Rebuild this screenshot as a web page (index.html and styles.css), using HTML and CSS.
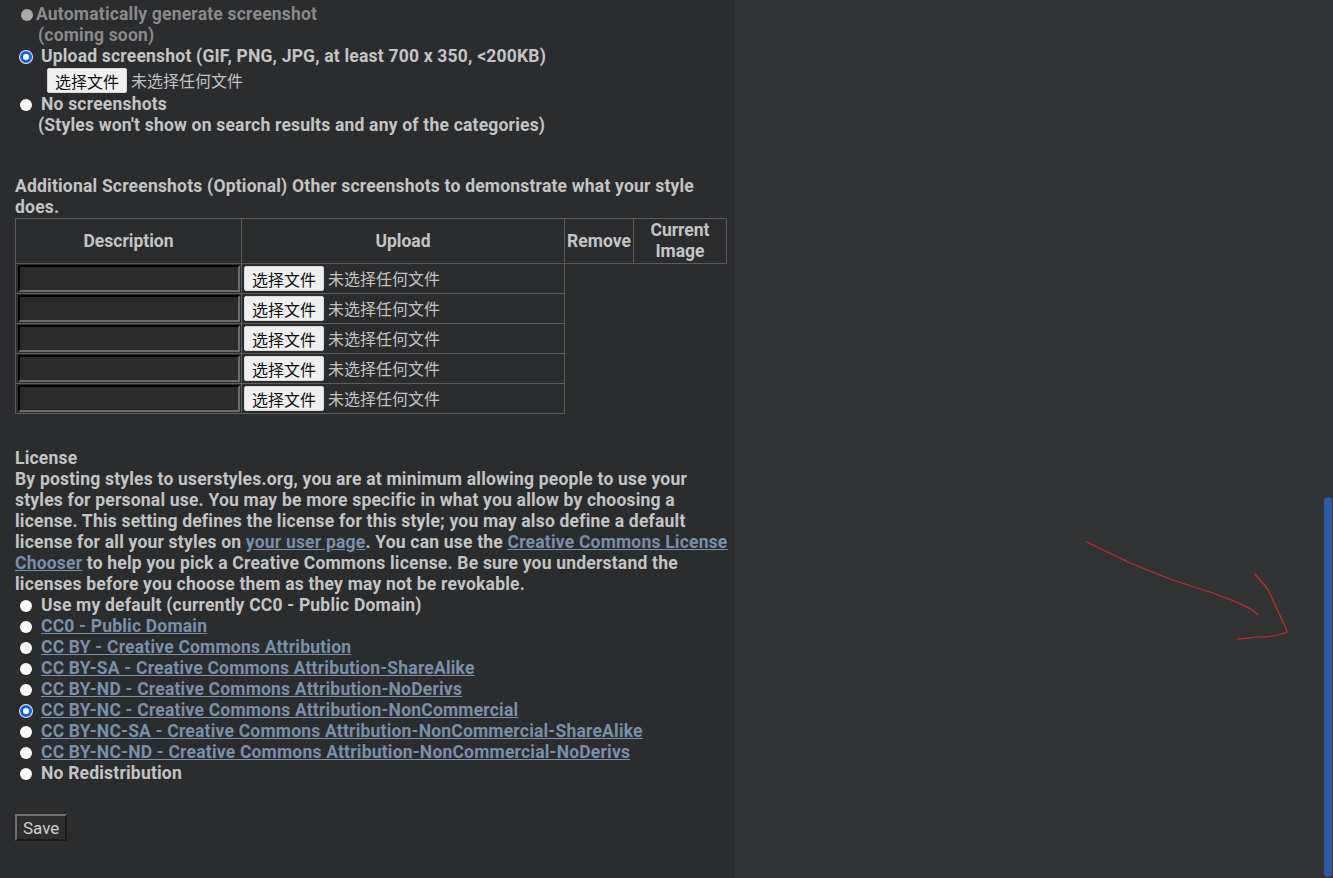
FILE: index.html
```html
<!DOCTYPE html>
<html lang="en">
<head>
<meta charset="utf-8">
<title>Edit style</title>
<link rel="stylesheet" href="styles.css">
</head>
<body>
<div class="page">
  <main class="content">
    <div class="opt disabled"><input type="radio" name="shot" disabled>Automatically generate screenshot<br>(coming soon)</div>
    <div class="opt"><input type="radio" name="shot" checked>Upload screenshot (GIF, PNG, JPG, at least 700 x 350, &lt;200KB)</div>
    <div class="file-row"><button class="file-btn" type="button">选择文件</button><span class="file-none">未选择任何文件</span></div>
    <div class="opt"><input type="radio" name="shot">No screenshots<br>(Styles won't show on search results and any of the categories)</div>

    <p class="section-title">Additional Screenshots (Optional) Other screenshots to demonstrate what your style does.</p>
    <table class="shots">
      <colgroup><col class="c-desc"><col class="c-up"><col class="c-rm"><col class="c-cur"></colgroup>
      <thead>
        <tr><th>Description</th><th>Upload</th><th>Remove</th><th>Current Image</th></tr>
      </thead>
      <tbody>
        <tr><td><input class="desc" type="text"></td><td><span class="file-row tight"><button class="file-btn" type="button">选择文件</button><span class="file-none">未选择任何文件</span></span></td></tr>
        <tr><td><input class="desc" type="text"></td><td><span class="file-row tight"><button class="file-btn" type="button">选择文件</button><span class="file-none">未选择任何文件</span></span></td></tr>
        <tr><td><input class="desc" type="text"></td><td><span class="file-row tight"><button class="file-btn" type="button">选择文件</button><span class="file-none">未选择任何文件</span></span></td></tr>
        <tr><td><input class="desc" type="text"></td><td><span class="file-row tight"><button class="file-btn" type="button">选择文件</button><span class="file-none">未选择任何文件</span></span></td></tr>
        <tr><td><input class="desc" type="text"></td><td><span class="file-row tight"><button class="file-btn" type="button">选择文件</button><span class="file-none">未选择任何文件</span></span></td></tr>
      </tbody>
    </table>

    <div class="license">
      <div>License</div>
      <p class="lic-text">By posting styles to userstyles.org, you are at minimum allowing people to use your styles for personal use. You may be more specific in what you allow by choosing a license. This setting defines the license for this style; you may also define a default license for all your styles on <a href="#">your user page</a>. You can use the <a href="#">Creative Commons License Chooser</a> to help you pick a Creative Commons license. Be sure you understand the licenses before you choose them as they may not be revokable.</p>
      <div class="opt"><input type="radio" name="lic">Use my default (currently CC0 - Public Domain)</div>
      <div class="opt"><input type="radio" name="lic"><a href="#">CC0 - Public Domain</a></div>
      <div class="opt"><input type="radio" name="lic"><a href="#">CC BY - Creative Commons Attribution</a></div>
      <div class="opt"><input type="radio" name="lic"><a href="#">CC BY-SA - Creative Commons Attribution-ShareAlike</a></div>
      <div class="opt"><input type="radio" name="lic"><a href="#">CC BY-ND - Creative Commons Attribution-NoDerivs</a></div>
      <div class="opt"><input type="radio" name="lic" checked><a href="#">CC BY-NC - Creative Commons Attribution-NonCommercial</a></div>
      <div class="opt"><input type="radio" name="lic"><a href="#">CC BY-NC-SA - Creative Commons Attribution-NonCommercial-ShareAlike</a></div>
      <div class="opt"><input type="radio" name="lic"><a href="#">CC BY-NC-ND - Creative Commons Attribution-NonCommercial-NoDerivs</a></div>
      <div class="opt"><input type="radio" name="lic">No Redistribution</div>
    </div>

    <button class="save" type="button">Save</button>
  </main>
  <div class="side">
    <svg class="arrow" width="598" height="878" viewBox="0 0 598 878" aria-hidden="true">
      <path d="M352 542 C370 551 385 558 395 563 C410 569 425 575 435 579 C450 584 462 588 475 592 C488 597 500 601 508 605 C515 608 520 612 523 615" />
      <path d="M520 574 C525 580 530 585 533 590 C538 600 543 610 547 620 C549 625 552 629 552 632 C548 634 543 635 538 636 C532 637 527 637 522 637 C514 638 508 639 502 639" />
    </svg>
  </div>
  <div class="scrollbar"><div class="thumb"></div></div>
</div>
</body>
</html>
```

FILE: styles.css
```css
html, body {
  margin: 0;
  height: 100%;
  overflow: hidden;
}
body {
  background: #323334;
  font-family: Roboto, "Noto Sans CJK SC", sans-serif;
  font-weight: 700;
  font-size: 17.5px;
  line-height: 21px;
  letter-spacing: 0.2px;
  color: #c4c4c4;
}
.page {
  display: flex;
  height: 878px;
}
.content {
  width: 735px;
  box-sizing: border-box;
  padding: 4px 0 0 15px;
  background: #2b2c2e;
  flex: none;
}
.side {
  flex: 1;
  position: relative;
  background: #323334;
}
.arrow {
  position: absolute;
  left: 0;
  top: 0;
  fill: none;
  stroke: #c0302c;
  stroke-width: 1.2;
  stroke-linecap: round;
}
.scrollbar {
  width: 9px;
  flex: none;
  background: #323334;
}
.thumb {
  margin-top: 497px;
  width: 8px;
  height: 380px;
  border-radius: 4px;
  background: #2e5aa2;
}

.opt {
  padding-left: 23px;
}
.opt input[type="radio"] {
  appearance: none;
  -webkit-appearance: none;
  width: 12px;
  height: 12px;
  margin: 0 9px 0 -18px;
  border-radius: 50%;
  background: #fbfbfb;
  vertical-align: -1px;
  box-sizing: border-box;
}
.opt input[type="radio"]:checked {
  border: 3px solid #1465d8;
  box-shadow: 0 0 0 1px #e8eefa;
  background: #ffffff;
}
.opt.disabled {
  color: #8a8a8a;
}
.opt.disabled input[type="radio"] {
  background: #a9a9a9;
  margin: 0 3px 0 -17px;
}

.file-row {
  display: flex;
  align-items: center;
  height: 27px;
  padding-left: 32px;
}
.file-row.tight {
  padding-left: 1px;
  height: 27px;
}
.file-btn {
  font-family: "Noto Sans CJK SC", sans-serif;
  font-weight: 400;
  font-size: 16px;
  line-height: 20px;
  letter-spacing: 0;
  color: #111;
  background: #f0f0f0;
  border: 1px solid #d8d8d8;
  border-radius: 2px;
  padding: 1px 7px;
  height: 25px;
  box-sizing: border-box;
}
.file-none {
  font-family: "Noto Sans CJK SC", sans-serif;
  font-weight: 400;
  font-size: 16px;
  letter-spacing: 0;
  color: #c3c3c3;
  margin-left: 4px;
}

.section-title {
  margin: 40px 0 0;
  width: 712px;
}
.shots {
  border-collapse: collapse;
  width: 711px;
  table-layout: fixed;
}
.c-desc { width: 226px; }
.c-up { width: 323px; }
.c-rm { width: 69px; }
.c-cur { width: 93px; }
.shots th {
  border: 1px solid #5c5c5c;
  padding: 1px 0;
  text-align: center;
  vertical-align: middle;
  font-weight: 700;
  letter-spacing: 0;
}
.shots td {
  border: 1px solid #5c5c5c;
  padding: 1px;
  height: 27px;
  box-sizing: content-box;
}
.desc {
  display: block;
  box-sizing: border-box;
  width: 222px;
  height: 27px;
  margin: 0 auto;
  background: #2b2b2b;
  border: 2px inset #6c6b66;
  border-top-color: #141414;
  border-left-color: #141414;
  color: #ddd;
}

.license {
  margin-top: 34px;
  width: 719px;
}
.lic-text {
  margin: 0;
}
a {
  color: #7990a8;
  text-decoration: underline;
}
.save {
  margin-top: 30px;
  font-family: Roboto, sans-serif;
  font-weight: 400;
  font-size: 17px;
  letter-spacing: 0;
  color: #cfcfcf;
  background: #2e2e2e;
  border: 2px outset #707070;
  padding: 0 6px;
  height: 27px;
  width: 52px;
}
```
